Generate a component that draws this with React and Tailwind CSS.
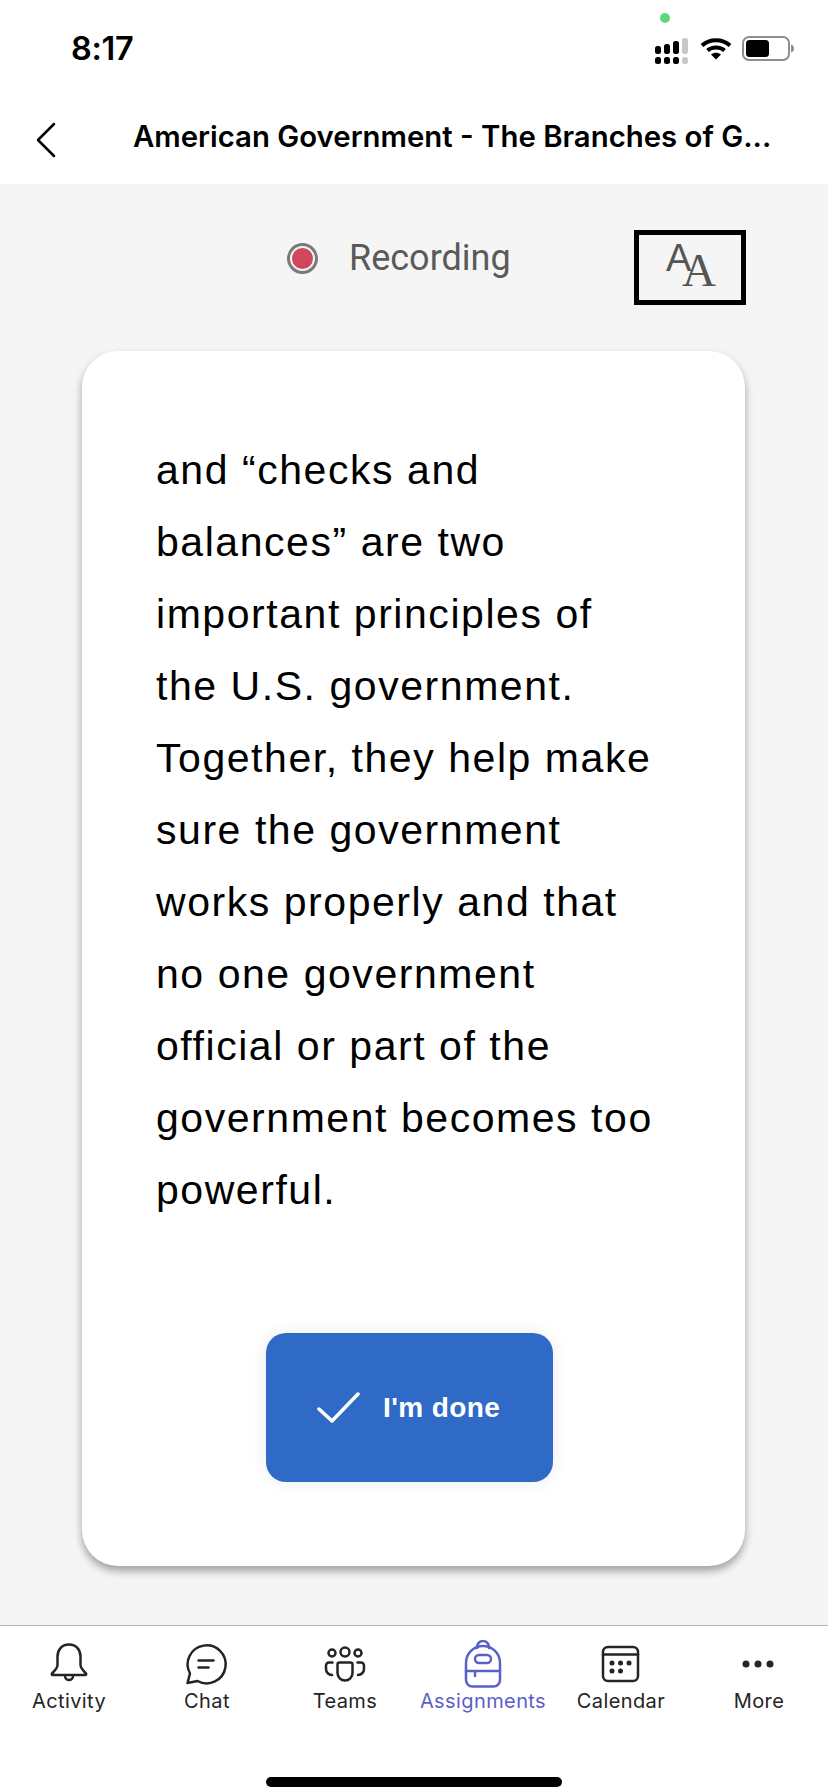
const LINES = [
  'and “checks and',
  'balances” are two',
  'important principles of',
  'the U.S. government.',
  'Together, they help make',
  'sure the government',
  'works properly and that',
  'no one government',
  'official or part of the',
  'government becomes too',
  'powerful.',
]

const INK = '#242424'

function Signal() {
  const cols = [
    { x: 3, top: 45, fill: '#000' },
    { x: 12, top: 43, fill: '#000' },
    { x: 21, top: 40, fill: '#000' },
    { x: 30, top: 37, fill: '#c8c8c8' },
  ]
  return (
    <svg width="36" height="30" viewBox="0 35 36 30" aria-hidden>
      {cols.map((c) => (
        <g key={c.x} fill={c.fill}>
          <rect x={c.x} y={c.top} width="6" height={53 - c.top} rx="2.5" />
          <rect x={c.x} y="56" width="6" height="7" rx="2.5" />
        </g>
      ))}
    </svg>
  )
}

function Wifi() {
  return (
    <svg width="32" height="24" viewBox="0 0 32 24" aria-hidden fill="none" stroke="#000" strokeWidth="4">
      <path d="M2 9.5C9.5 2.5 22.5 2.5 30 9.5" />
      <path d="M7.5 14.5C12 10.5 20 10.5 24.5 14.5" />
      <path d="M16 23.500l-5-5c3-2.200 7-2.200 10 0z" fill="#000" stroke="none" />
    </svg>
  )
}

function Battery() {
  return (
    <svg width="53" height="25" viewBox="0 0 53 25" aria-hidden>
      <rect x="1" y="1" width="46" height="23" rx="6" fill="none" stroke="#8e8e8e" strokeWidth="2" />
      <rect x="4" y="4" width="23" height="17" rx="3.5" fill="#000" />
      <path d="M49 8.500c2 .5 3 2 3 4s-1 3.500-3 4z" fill="#8e8e8e" />
    </svg>
  )
}

function StatusBar() {
  return (
    <div className="relative flex h-[92px] items-start bg-white">
      <span className="ml-[71px] mt-[29px] font-['Inter',sans-serif] text-[32.5px] font-semibold leading-[40px] tracking-[-0.3px] text-black">8:17</span>
      <span className="absolute left-[660px] top-[13px] h-[10px] w-[10px] rounded-full bg-[#5bd97c]" />
      <div className="ml-auto mr-[33px] mt-[36px] flex items-start">
        <Signal />
        <div className="ml-[12px]"><Wifi /></div>
        <div className="ml-[10px]"><Battery /></div>
      </div>
    </div>
  )
}

function NavBar() {
  return (
    <div className="flex h-[92px] items-start bg-white">
      <svg className="ml-[36px] mt-[30px]" width="22" height="36" viewBox="0 0 22 36" fill="none" stroke="#000" strokeWidth="2.5" strokeLinecap="round" strokeLinejoin="round" aria-hidden>
        <path d="M18 2 2 18l16 16" />
      </svg>
      <span className="ml-[75px] mt-[25px] font-['Inter',sans-serif] text-[29.35px] font-semibold leading-[40px] text-black">
        American Government - The Branches of G...
      </span>
    </div>
  )
}

function RecordingRow() {
  return (
    <div className="flex items-start">
      <span className="ml-[287px] mt-[13px] flex h-[31px] w-[31px] items-center justify-center rounded-full border-[3px] border-[#7a7a7a]">
        <span className="h-[21px] w-[21px] rounded-full bg-[#d1465a]" />
      </span>
      <span className="ml-[31px] mt-[6px] font-['Roboto',sans-serif] text-[36px] leading-[44px] text-[#5a5a5a]">Recording</span>
      <div className="ml-auto mr-[82px] flex h-[75px] w-[112px] items-start justify-center border-[5px] border-black text-[#555555]">
        <span className="relative mt-[3px] h-[60px] w-[60px]">
          <span className="absolute left-[6px] top-[-2px] font-['Liberation_Sans',sans-serif] text-[38px] leading-[44px]">A</span>
          <span className="absolute left-[22px] top-[6px] font-['Liberation_Serif',serif] text-[47px] leading-[52px]">A</span>
        </span>
      </div>
    </div>
  )
}

function Card() {
  return (
    <div className="ml-[82px] mt-[46px] h-[1215px] w-[663px] rounded-[36px] bg-white pt-[83px] shadow-[0_5px_8px_rgba(0,0,0,0.35)]">
      <div className="ml-[74px] font-['Liberation_Sans',sans-serif] text-[41px] leading-[72px] tracking-[1.55px] text-black">
        {LINES.map((line) => (
          <div key={line} className="whitespace-nowrap">{line}</div>
        ))}
      </div>
      <div className="ml-[184px] mt-[107px] flex h-[149px] w-[287px] items-center rounded-[20px] bg-[#2f6ac6] shadow-[0_0_18px_rgba(0,0,0,0.08)]">
        <svg className="ml-[51px]" width="44" height="32" viewBox="0 0 44 32" fill="none" stroke="#fff" strokeWidth="3.5" strokeLinecap="round" strokeLinejoin="round" aria-hidden>
          <path d="M2 17l13 12L41 2" />
        </svg>
        <span className="ml-[22px] font-['Liberation_Sans',sans-serif] text-[28px] font-bold leading-[36px] tracking-[0.4px] text-white">I'm done</span>
      </div>
    </div>
  )
}

const TABS = [
  {
    label: 'Activity',
    icon: (
      <>
        <path d="M24 4.5c-7.500 0-11.500 5.500-11.500 12v8.500c0 2-3 6-5.500 8.500-.5.600-.2 1.500.7 1.500h32.600c.9 0 1.200-.9.700-1.500-2.500-2.500-5.500-6.500-5.500-8.500v-8.500c0-6.500-4-12-11.500-12z" />
        <path d="M20 36a4 4 0 0 0 8 0" />
      </>
    ),
  },
  {
    label: 'Chat',
    icon: (
      <>
        <path d="M4.500 43l2.500-9.500A19 19 0 1 1 14.500 41z" />
        <path d="M15.500 20.500h15M15.500 27.500h10" />
      </>
    ),
  },
  {
    label: 'Teams',
    icon: (
      <>
        <circle cx="24" cy="12" r="4.500" />
        <circle cx="11" cy="13" r="3.500" />
        <circle cx="37" cy="13" r="3.500" />
        <path d="M18.500 22.500h11a2 2 0 0 1 2 2V33a7.500 7.500 0 0 1-15 0v-8.500a2 2 0 0 1 2-2z" />
        <path d="M11.500 22.500H8a3 3 0 0 0-3 3V29a6 6 0 0 0 6 6M36.500 22.500H40a3 3 0 0 1 3 3V29a6 6 0 0 1-6 6" />
      </>
    ),
  },
  {
    label: 'Assignments',
    active: true,
    icon: (
      <>
        <path d="M7 23a17 17 0 0 1 34 0v17a6.500 6.500 0 0 1-6.500 6.500h-21A6.500 6.500 0 0 1 7 40z" />
        <path d="M18 8V7a6 6 0 0 1 12 0v1" />
        <rect x="16" y="15" width="16" height="8" rx="4" />
        <path d="M7 31h34M16 31v5" />
      </>
    ),
  },
  {
    label: 'Calendar',
    icon: (
      <>
        <rect x="6" y="7" width="35" height="34" rx="5" />
        <path d="M6 14.500h35" />
        <g fill={INK} stroke="none">
          <circle cx="15" cy="23" r="2.500" />
          <circle cx="23.500" cy="23" r="2.500" />
          <circle cx="32" cy="23" r="2.500" />
          <circle cx="15" cy="31" r="2.500" />
          <circle cx="23.500" cy="31" r="2.500" />
        </g>
      </>
    ),
  },
  {
    label: 'More',
    icon: (
      <g fill={INK} stroke="none">
        <circle cx="11" cy="24" r="3.500" />
        <circle cx="23" cy="24" r="3.500" />
        <circle cx="35" cy="24" r="3.500" />
      </g>
    ),
  },
]

function TabBar() {
  return (
    <div className="h-[167px] border-t-[1px] border-[#b4b4b4] bg-white">
      <div className="grid grid-cols-6 pt-[14px]">
        {TABS.map((t) => (
          <div key={t.label} className="flex flex-col items-center">
            <svg width="48" height="48" viewBox="0 0 48 48" fill="none" stroke={t.active ? '#5b5fc7' : INK} strokeWidth="2.5" strokeLinecap="round" strokeLinejoin="round" aria-hidden>
              {t.icon}
            </svg>
            <span className={`mt-[1px] font-['Inter',sans-serif] text-[20px] leading-[24px] tracking-[0.4px] ${t.active ? 'text-[#5b5fc7]' : 'text-[#242424]'}`}>
              {t.label}
            </span>
          </div>
        ))}
      </div>
      <div className="ml-[266px] mt-[64px] h-[10px] w-[296px] rounded-full bg-black" />
    </div>
  )
}

export default function App() {
  return (
    <div className="flex h-[1792px] w-[828px] flex-col overflow-hidden bg-[#f5f5f5]">
      <StatusBar />
      <NavBar />
      <div className="flex-1 pt-[46px]">
        <RecordingRow />
        <Card />
      </div>
      <TabBar />
    </div>
  )
}
